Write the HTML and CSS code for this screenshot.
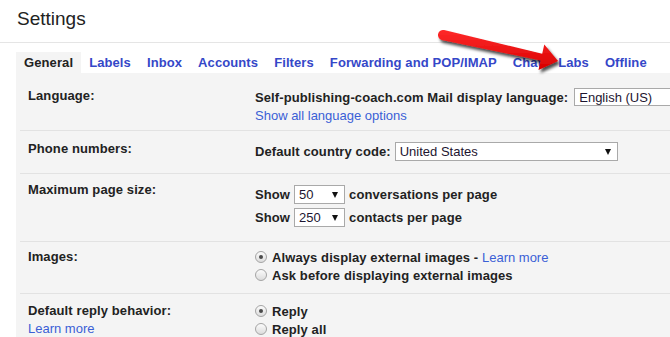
FILE: index.html
```html
<!DOCTYPE html>
<html lang="en">
<head>
  <meta charset="UTF-8" />
  <title>Settings</title>
  <link rel="stylesheet" href="styles.css">
</head>
<body>
  <div class="header">
    <h1>Settings</h1>
  </div>

  <div class="tabs">
    <a class="tab active" href="#">General</a>
    <a class="tab" href="#">Labels</a>
    <a class="tab" href="#">Inbox</a>
    <a class="tab" href="#">Accounts</a>
    <a class="tab" href="#">Filters</a>
    <a class="tab" href="#">Forwarding and POP/IMAP</a>
    <a class="tab" href="#">Chat</a>
    <a class="tab" href="#">Labs</a>
    <a class="tab" href="#">Offline</a>
  </div>

  <div class="panel">
    <div class="row row-lang">
      <div class="label">Language:</div>
      <div class="value">
        <div class="line line-lang">Self-publishing-coach.com Mail display language: <span class="select select-lang">English (US)</span></div>
        <div class="line-text"><a class="link" href="#">Show all language options</a></div>
      </div>
    </div>

    <div class="row row-phone">
      <div class="label">Phone numbers:</div>
      <div class="value">
        <div class="line line-select">Default country code: <span class="select select-country">United States <i class="caret"></i></span></div>
      </div>
    </div>

    <div class="row row-size">
      <div class="label">Maximum page size:</div>
      <div class="value">
        <div class="line line-select">Show <span class="select select-small">50 <i class="caret"></i></span> conversations per page</div>
        <div class="line line-select">Show <span class="select select-small">250 <i class="caret"></i></span> contacts per page</div>
      </div>
    </div>

    <div class="row row-images">
      <div class="label">Images:</div>
      <div class="value">
        <div class="line line-radio"><span class="radio checked"></span>Always display external images&nbsp;-&nbsp;<a class="link" href="#">Learn more</a></div>
        <div class="line line-radio"><span class="radio"></span>Ask before displaying external images</div>
      </div>
    </div>

    <div class="row row-reply">
      <div class="label">
        Default reply behavior:
        <div><a class="link" href="#">Learn more</a></div>
      </div>
      <div class="value">
        <div class="line line-radio"><span class="radio checked"></span>Reply</div>
        <div class="line line-radio"><span class="radio"></span>Reply all</div>
      </div>
    </div>
  </div>

  <!-- red annotation arrow pointing at the Labs tab -->
  <svg class="arrow" width="670" height="337" viewBox="0 0 670 337">
    <defs>
      <linearGradient id="red" x1="0" y1="0" x2="0" y2="1">
        <stop offset="0" stop-color="#ff2a2a" />
        <stop offset="1" stop-color="#d80000" />
      </linearGradient>
      <filter id="shadow" x="-20%" y="-50%" width="140%" height="200%">
        <feDropShadow dx="2" dy="3" stdDeviation="1.6" flood-color="#000" flood-opacity="0.7" />
      </filter>
    </defs>
    <path d="M444.1,30.1 L542.2,53.8 L544.3,44.5 L558,61 L538.5,69.9 L540.6,60.6 L441.9,39.9 A5,5 0 0 1 444.1,30.1 Z" fill="url(#red)" filter="url(#shadow)" />
  </svg>
</body>
</html>
```

FILE: styles.css
```css
* {
  box-sizing: border-box;
}
body {
  margin: 0;
  font-family: "Liberation Sans", Arial, sans-serif;
  font-size: 13px;
  color: #222;
  background: #fff;
  overflow: hidden;
  position: relative;
  width: 670px;
  height: 337px;
}
a {
  text-decoration: none;
}
.header {
  border-bottom: 1px solid #e5e5e5;
}
h1 {
  margin: 0;
  padding: 8px 17px 12px;
  font-size: 19px;
  line-height: 22px;
  font-weight: normal;
  color: #222;
}
.tabs {
  display: flex;
  margin: 9px 0 0 16px;
  height: 21px;
}
.tab {
  padding: 0 8px;
  line-height: 21px;
  font-weight: bold;
  letter-spacing: 0.1px;
  color: #3547c8;
}
.tab.active {
  background: #f4f4f4;
  color: #222;
}
.panel {
  margin-left: 16px;
  background: #f4f4f4;
  height: 264px;
}
.row {
  display: grid;
  grid-template-columns: 235px 1fr;
  margin-left: 4px;
  border-bottom: 1px solid #e2e2e2;
  font-weight: bold;
  letter-spacing: 0.1px;
}
.row-lang {
  padding: 14px 0 5px;
}
.row-phone {
  padding: 9px 0 10px;
}
.row-size {
  padding: 9px 0 12px;
}
.row-images {
  padding: 6px 0 9px;
}
.row-reply {
  padding: 8px 0 0;
  border-bottom: none;
}
.label {
  padding-left: 8px;
  line-height: 18px;
}
.row-size .label {
  margin-top: -2px;
}
.value {
  white-space: nowrap;
}
.line {
  display: flex;
  align-items: center;
}
.line-lang {
  height: 20px;
}
.line-select {
  height: 23px;
}
.line-radio {
  height: 18px;
}
.line-text {
  line-height: 18px;
}
.link {
  font-weight: normal;
  letter-spacing: 0;
  color: #3a5fd6;
}
.select {
  display: inline-flex;
  align-items: center;
  justify-content: space-between;
  height: 19px;
  margin: 0 4px;
  padding: 0 6px 0 4px;
  background: #fff;
  border: 1px solid #a9a9a9;
  font-weight: normal;
  letter-spacing: 0;
  color: #1d1530;
}
.select-lang {
  height: 18px;
  width: 120px;
  margin-left: 6px;
}
.select-country {
  width: 223px;
}
.select-small {
  width: 51px;
}
.caret {
  width: 0;
  height: 0;
  border-left: 3.5px solid transparent;
  border-right: 3.5px solid transparent;
  border-top: 6px solid #111;
}
.radio {
  display: inline-flex;
  align-items: center;
  justify-content: center;
  width: 12px;
  height: 12px;
  margin-right: 5px;
  border-radius: 50%;
  border: 1px solid #a4a4a4;
  background: linear-gradient(#fbfbfb, #dcdcdc);
}
.radio.checked::after {
  content: "";
  width: 4px;
  height: 4px;
  border-radius: 50%;
  background: #4a4a4a;
}
.arrow {
  position: absolute;
  top: 0;
  left: 0;
  pointer-events: none;
}
```
